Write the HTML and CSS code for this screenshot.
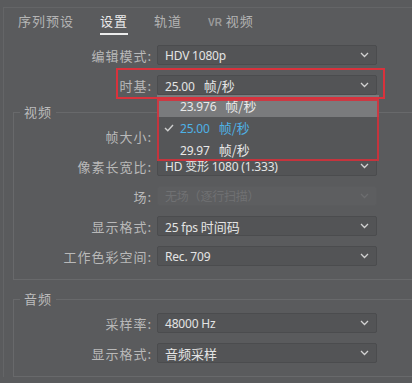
FILE: index.html
```html
<!DOCTYPE html>
<html lang="zh-CN">
<head>
    <meta charset="UTF-8">
    <meta name="viewport" content="width=device-width, initial-scale=1.0">
    <title>序列设置</title>
    <link rel="stylesheet" href="styles.css">
</head>
<body>
    <div class="panel">
        <div class="tabs">
            <div class="tab">序列预设</div>
            <div class="tab active">设置</div>
            <div class="tab">轨道</div>
            <div class="tab"><span class="vr">VR</span> 视频</div>
        </div>

        <div class="rows top">
            <div class="row">
                <div class="label">编辑模式:</div>
                <div class="select"><span>HDV 1080p</span><svg class="chev" width="9" height="6" viewBox="0 0 9 6"><polyline points="1,1 4.5,4.5 8,1"/></svg></div>
            </div>
            <div class="row">
                <div class="mark"></div>
                <div class="label">时基:</div>
                <div class="select"><span>25.00<span class="cjk gap">帧/秒</span></span><svg class="chev" width="9" height="6" viewBox="0 0 9 6"><polyline points="1,1 4.5,4.5 8,1"/></svg>
                    <div class="menu">
                        <div class="item hover">23.976<span class="cjk gap">帧/秒</span></div>
                        <div class="item checked"><svg class="check" width="10" height="8" viewBox="0 0 10 8"><polyline points="1,4 3.8,6.8 9,1"/></svg>25.00<span class="cjk gap">帧/秒</span></div>
                        <div class="item">29.97<span class="cjk gap">帧/秒</span></div>
                        <div class="menu-mark"></div>
                    </div>
                </div>
            </div>
        </div>

        <fieldset class="group">
            <legend>视频</legend>
            <div class="row">
                <div class="label">帧大小:</div>
                <div class="select"><span></span><svg class="chev" width="9" height="6" viewBox="0 0 9 6"><polyline points="1,1 4.5,4.5 8,1"/></svg></div>
            </div>
            <div class="row">
                <div class="label">像素长宽比:</div>
                <div class="select"><span>HD 变形 1080 (1.333)</span><svg class="chev" width="9" height="6" viewBox="0 0 9 6"><polyline points="1,1 4.5,4.5 8,1"/></svg></div>
            </div>
            <div class="row">
                <div class="label">场:</div>
                <div class="select disabled"><span>无场（逐行扫描）</span><svg class="chev" width="9" height="6" viewBox="0 0 9 6"><polyline points="1,1 4.5,4.5 8,1"/></svg></div>
            </div>
            <div class="row">
                <div class="label">显示格式:</div>
                <div class="select"><span>25 fps <span class="cjk">时间码</span></span><svg class="chev" width="9" height="6" viewBox="0 0 9 6"><polyline points="1,1 4.5,4.5 8,1"/></svg></div>
            </div>
            <div class="row">
                <div class="label">工作色彩空间:</div>
                <div class="select"><span>Rec. 709</span><svg class="chev" width="9" height="6" viewBox="0 0 9 6"><polyline points="1,1 4.5,4.5 8,1"/></svg></div>
            </div>
        </fieldset>

        <fieldset class="group audio">
            <legend>音频</legend>
            <div class="row">
                <div class="label">采样率:</div>
                <div class="select"><span>48000 Hz</span><svg class="chev" width="9" height="6" viewBox="0 0 9 6"><polyline points="1,1 4.5,4.5 8,1"/></svg></div>
            </div>
            <div class="row">
                <div class="label">显示格式:</div>
                <div class="select"><span class="cjk">音频采样</span><svg class="chev" width="9" height="6" viewBox="0 0 9 6"><polyline points="1,1 4.5,4.5 8,1"/></svg></div>
            </div>
        </fieldset>
    </div>
</body>
</html>
```

FILE: styles.css
```css
html,
body {
    overflow: hidden;
}

body {
    margin: 0;
    height: 383px;
    background: #5a5b5d;
    color: #b9b9b9;
    font-family: "Noto Sans CJK SC", sans-serif;
    font-size: 13px;
}

.panel {
    margin: 7px 0 0 3px;
    border-top: 1px solid #646567;
    border-left: 1px solid #646567;
}

.tabs {
    display: flex;
    padding-left: 14px;
}

.tab {
    padding: 4px 0 1px;
    line-height: 18px;
    margin-right: 26px;
    border-bottom: 2px solid transparent;
    letter-spacing: 1px;
    color: #b4b4b4;
}

.tab.active {
    color: #ececec;
    border-bottom-color: #ececec;
}

.vr {
    font-family: "Liberation Sans", sans-serif;
    font-size: 10px;
    font-weight: bold;
    letter-spacing: 0;
    color: #9a9a9a;
}

.rows.top {
    margin-top: 5px;
}

.row {
    position: relative;
    display: grid;
    grid-template-columns: 148px 220px;
    column-gap: 5px;
    align-items: center;
    height: 30px;
}

.group .row {
    grid-template-columns: 138px 220px;
}

.label {
    text-align: right;
    letter-spacing: 1px;
    white-space: nowrap;
}

.select {
    position: relative;
    height: 20px;
    box-sizing: border-box;
    border: 1px solid #4b4c4e;
    border-radius: 2px;
    background: #535456;
    display: flex;
    align-items: center;
    justify-content: space-between;
    padding: 0 7px;
    color: #e4e4e4;
    font-family: "Noto Sans", "Noto Sans CJK SC", sans-serif;
    font-size: 12px;
    letter-spacing: -0.2px;
    white-space: nowrap;
}

.cjk {
    font-family: "Noto Sans CJK SC", sans-serif;
    font-size: 13px;
    letter-spacing: 0;
}

.gap {
    margin-left: 9px;
}

.select.disabled {
    background: #5d5e60;
    border-color: #5b5c5e;
    color: #707173;
}

.chev {
    fill: none;
    stroke: #d2d2d2;
    stroke-width: 1.3;
}

.disabled .chev {
    stroke: #6c6d6f;
}

.mark {
    position: absolute;
    left: 112px;
    top: -2px;
    width: 269px;
    height: 31px;
    box-sizing: border-box;
    border: 2px solid #d9323c;
    z-index: 3;
}

.menu {
    position: absolute;
    left: -1px;
    top: 19px;
    width: 222px;
    background: #555658;
    z-index: 2;
}

.item {
    position: relative;
    height: 22px;
    line-height: 22px;
    padding-left: 23px;
    color: #e8e8e8;
}

.item.hover {
    background: #7a7b7d;
}

.item.checked {
    color: #4eb2e6;
}

.check {
    position: absolute;
    left: 7px;
    top: 7px;
    fill: none;
    stroke: #cfcfcf;
    stroke-width: 1.4;
}

.menu-mark {
    position: absolute;
    left: 0;
    top: 4px;
    right: 0;
    bottom: 0;
    border: 2px solid rgba(217, 46, 56, 0.85);
}

.group {
    margin: 3px 0 0 9px;
    padding: 0 0 8px;
    border: 1px solid #68696b;
    border-right: none;
    min-width: 0;
}

.group legend {
    margin-left: 6px;
    padding: 0 4px;
    line-height: 18px;
    letter-spacing: 1px;
    color: #bcbcbc;
}

.group.audio {
    margin-top: 10px;
    padding-bottom: 8px;
}
```
